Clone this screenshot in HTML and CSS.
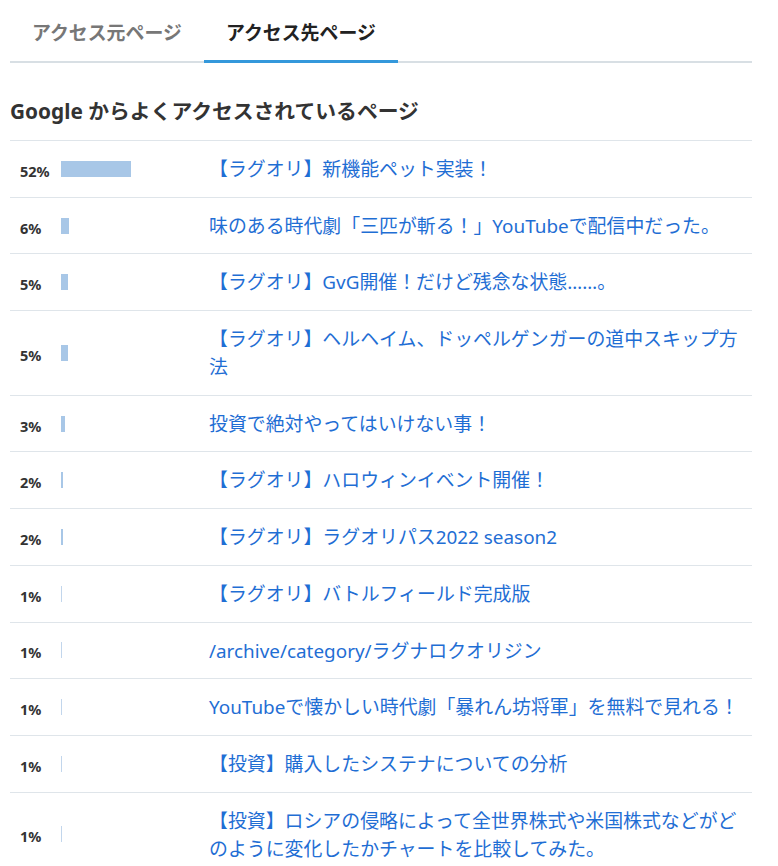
FILE: index.html
```html
<!DOCTYPE html>
<html lang="ja">
<head>
  <meta charset="UTF-8">
  <meta name="viewport" content="width=device-width, initial-scale=1.0">
  <title>アクセス解析</title>
  <link rel="stylesheet" href="styles.css">
</head>
<body>
  <div class="page">
    <ul class="tabs">
      <li class="tab">アクセス元ページ</li>
      <li class="tab active">アクセス先ページ</li>
    </ul>

    <h2 class="section-title">Google からよくアクセスされているページ</h2>

    <table class="ranking">
      <colgroup>
        <col class="col-pct">
        <col class="col-bar">
        <col>
      </colgroup>
      <tbody>
        <tr>
          <td class="pct">52%</td>
          <td class="bar-cell"><span class="bar" style="width: 70px"></span></td>
          <td class="title"><a href="#">【ラグオリ】新機能ペット実装！</a></td>
        </tr>
        <tr>
          <td class="pct">6%</td>
          <td class="bar-cell"><span class="bar" style="width: 8px"></span></td>
          <td class="title"><a href="#">味のある時代劇「三匹が斬る！」YouTubeで配信中だった。</a></td>
        </tr>
        <tr>
          <td class="pct">5%</td>
          <td class="bar-cell"><span class="bar" style="width: 7px"></span></td>
          <td class="title"><a href="#">【ラグオリ】GvG開催！だけど残念な状態……。</a></td>
        </tr>
        <tr>
          <td class="pct">5%</td>
          <td class="bar-cell"><span class="bar" style="width: 7px"></span></td>
          <td class="title"><a href="#">【ラグオリ】ヘルヘイム、ドッペルゲンガーの道中スキップ方法</a></td>
        </tr>
        <tr>
          <td class="pct">3%</td>
          <td class="bar-cell"><span class="bar" style="width: 4px"></span></td>
          <td class="title"><a href="#">投資で絶対やってはいけない事！</a></td>
        </tr>
        <tr>
          <td class="pct">2%</td>
          <td class="bar-cell"><span class="bar" style="width: 2px"></span></td>
          <td class="title"><a href="#">【ラグオリ】ハロウィンイベント開催！</a></td>
        </tr>
        <tr>
          <td class="pct">2%</td>
          <td class="bar-cell"><span class="bar" style="width: 2px"></span></td>
          <td class="title"><a href="#">【ラグオリ】ラグオリパス2022 season2</a></td>
        </tr>
        <tr>
          <td class="pct">1%</td>
          <td class="bar-cell"><span class="bar thin" style="width: 1px"></span></td>
          <td class="title"><a href="#">【ラグオリ】バトルフィールド完成版</a></td>
        </tr>
        <tr>
          <td class="pct">1%</td>
          <td class="bar-cell"><span class="bar thin" style="width: 1px"></span></td>
          <td class="title"><a href="#">/archive/category/ラグナロクオリジン</a></td>
        </tr>
        <tr>
          <td class="pct">1%</td>
          <td class="bar-cell"><span class="bar thin" style="width: 1px"></span></td>
          <td class="title"><a href="#">YouTubeで懐かしい時代劇「暴れん坊将軍」を無料で見れる！</a></td>
        </tr>
        <tr>
          <td class="pct">1%</td>
          <td class="bar-cell"><span class="bar thin" style="width: 1px"></span></td>
          <td class="title"><a href="#">【投資】購入したシステナについての分析</a></td>
        </tr>
        <tr>
          <td class="pct">1%</td>
          <td class="bar-cell"><span class="bar thin" style="width: 1px"></span></td>
          <td class="title"><a href="#">【投資】ロシアの侵略によって全世界株式や米国株式などがどのように変化したかチャートを比較してみた。</a></td>
        </tr>
      </tbody>
    </table>
  </div>
</body>
</html>
```

FILE: styles.css
```css
/* Base */
body {
  margin: 0;
  font-family: "Noto Sans", "Noto Sans CJK JP", sans-serif;
  font-size: 18.9px;
  line-height: 28px;
  color: #333;
  background: #fff;
}

.page {
  padding: 0 10px;
  width: 742px;
}

/* Tabs */
.tabs {
  list-style: none;
  margin: 0;
  padding: 0;
  display: flex;
  border-bottom: 2px solid #d8dfe4;
}

.tab {
  width: 194px;
  box-sizing: border-box;
  padding: 19px 22px 13px;
  font-weight: bold;
  color: #777;
  border-bottom: 3px solid transparent;
  margin-bottom: -2px;
  white-space: nowrap;
}

.tab.active {
  color: #222;
  border-bottom-color: #3498db;
}

/* Section heading */
.section-title {
  margin: 34px 0 15px;
  font-size: 20.8px;
  line-height: 28px;
  font-weight: bold;
  color: #333;
}

/* Ranking table */
.ranking {
  width: 742px;
  border-collapse: collapse;
  table-layout: fixed;
}

.col-pct {
  width: 51px;
}

.col-bar {
  width: 148px;
}

.ranking tr {
  border-top: 1px solid #dfe5ea;
}

.ranking td {
  padding: 0;
  vertical-align: middle;
}

.pct {
  padding-left: 10px !important;
  padding-top: 4px !important;
  font-size: 14.5px;
  font-weight: bold;
  color: #333;
  white-space: nowrap;
}

.bar-cell {
  height: 16px;
}

.bar {
  display: block;
  height: 16px;
  background: #a8c7e7;
}

.bar.thin {
  background: #c2d6ec;
}

.title {
  padding: 14px 0 13.7px !important;
}

.title a {
  color: #1f6ed4;
  text-decoration: none;
}
```
